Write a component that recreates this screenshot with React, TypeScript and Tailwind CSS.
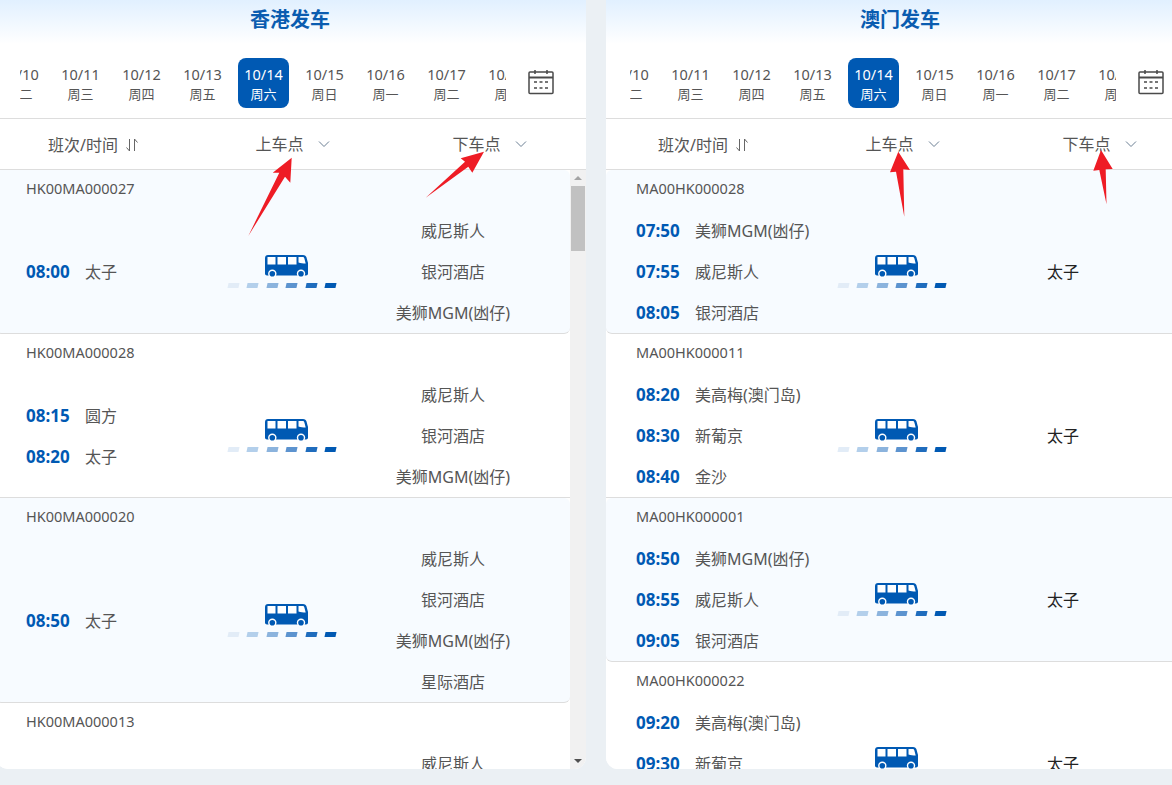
import React from 'react';

interface Stop {
  time?: string;
  name: string;
}

interface Trip {
  code: string;
  from: Stop[];
  to: string[];
}

const dates = [
  { d: '10/10', w: '周二' },
  { d: '10/11', w: '周三' },
  { d: '10/12', w: '周四' },
  { d: '10/13', w: '周五' },
  { d: '10/14', w: '周六', active: true },
  { d: '10/15', w: '周日' },
  { d: '10/16', w: '周一' },
  { d: '10/17', w: '周二' },
  { d: '10/18', w: '周三' },
];

const macauStops = ['威尼斯人', '银河酒店', '美狮MGM(凼仔)'];

const hkTrips: Trip[] = [
  { code: 'HK00MA000027', from: [{ time: '08:00', name: '太子' }], to: macauStops },
  {
    code: 'HK00MA000028',
    from: [
      { time: '08:15', name: '圆方' },
      { time: '08:20', name: '太子' },
    ],
    to: macauStops,
  },
  { code: 'HK00MA000020', from: [{ time: '08:50', name: '太子' }], to: [...macauStops, '星际酒店'] },
  { code: 'HK00MA000013', from: [{ time: '09:20', name: '太子' }], to: macauStops },
];

const macauTrips: Trip[] = [
  {
    code: 'MA00HK000028',
    from: [
      { time: '07:50', name: '美狮MGM(凼仔)' },
      { time: '07:55', name: '威尼斯人' },
      { time: '08:05', name: '银河酒店' },
    ],
    to: ['太子'],
  },
  {
    code: 'MA00HK000011',
    from: [
      { time: '08:20', name: '美高梅(澳门岛)' },
      { time: '08:30', name: '新葡京' },
      { time: '08:40', name: '金沙' },
    ],
    to: ['太子'],
  },
  {
    code: 'MA00HK000001',
    from: [
      { time: '08:50', name: '美狮MGM(凼仔)' },
      { time: '08:55', name: '威尼斯人' },
      { time: '09:05', name: '银河酒店' },
    ],
    to: ['太子'],
  },
  {
    code: 'MA00HK000022',
    from: [
      { time: '09:20', name: '美高梅(澳门岛)' },
      { time: '09:30', name: '新葡京' },
      { time: '09:40', name: '金沙' },
    ],
    to: ['太子'],
  },
];

const CalendarIcon = () => (
  <svg width="26" height="26" viewBox="0 0 26 26" fill="none" stroke="#4a4a4a" strokeWidth="1.5">
    <rect x="1" y="3" width="24" height="21.5" rx="1" />
    <path d="M1 8.5h24" strokeWidth="2" />
    <path d="M7 1v4M19 1v4" />
    <path d="M6 13h3M11.5 13h3M17 13h3M6 19h3M11.5 19h3M17 19h3" />
  </svg>
);

const Chevron = () => (
  <svg width="12" height="8" viewBox="0 0 12 8" fill="none" stroke="#6b7f94" strokeWidth="1">
    <path d="M1 1.5l5 5 5-5" />
  </svg>
);

const SortIcon = () => (
  <svg width="14" height="14" viewBox="0 0 14 14" fill="none" stroke="#666" strokeWidth="1">
    <path d="M4.5 1v12L1.5 9.5M9.5 13V1l3 3.5" />
  </svg>
);

const BusIcon = () => (
  <svg width="43" height="23" viewBox="0 0 43 23" fill="#0059b3">
    <path d="M3 0h35c2 0 3 1 3.5 2.5L43 8v10.5c0 1.2-.8 2-2 2H2c-1.2 0-2-.8-2-2V3c0-1.8 1.2-3 3-3z" />
    <path
      fill="#fff"
      d="M2.5 2h8v7.500h-8zM12.500 2h8.500v7.500h-8.500zM23 2h8.500v7.500H23zM33.500 2h4c1 0 1.500.5 1.800 1.300l1.400 5.200c-2.700 0-5-.3-7.200-1z"
    />
    <circle cx="7.300" cy="18.800" r="4.200" fill="#fff" />
    <circle cx="7.300" cy="18.800" r="2.800" />
    <circle cx="36" cy="18.800" r="4.200" fill="#fff" />
    <circle cx="36" cy="18.800" r="2.800" />
  </svg>
);

const RouteDashes = () => (
  <div className="mt-[5px] -ml-[9px] flex gap-[9px]">
    <span className="h-[5px] w-[10.5px] -skew-x-12 bg-[#e2ecf7]" />
    <span className="h-[5px] w-[10.5px] -skew-x-12 bg-[#b3cfeb]" />
    <span className="h-[5px] w-[10.5px] -skew-x-12 bg-[#8bb3dd]" />
    <span className="h-[5px] w-[10.5px] -skew-x-12 bg-[#5c93cf]" />
    <span className="h-[5px] w-[10.5px] -skew-x-12 bg-[#1f6cbd]" />
    <span className="h-[5px] w-[10.5px] -skew-x-12 bg-[#0059b3]" />
  </div>
);

const TripRow = ({ trip, tinted, dark }: { trip: Trip; tinted: boolean; dark: boolean }) => (
  <div className={`border-b border-[#dddddd] ${tinted ? 'rounded-md bg-[#f7fbff]' : 'bg-white'}`}>
    <div className="flex h-[40px] items-center pb-[2px] pl-[30px] text-[14.5px] text-[#555555]">{trip.code}</div>
    <div className="flex items-center">
      {/* half-pixel centring rounds up in the original */}
      <div className={`w-[200px] pl-[30px] ${(trip.to.length - trip.from.length) % 2 !== 0 ? 'pt-[1px]' : ''}`}>
        {trip.from.map((s) => (
          <div key={s.name} className="flex h-[41px] items-center whitespace-nowrap text-[16px]">
            <span className="w-[59px] shrink-0 text-[17px] font-bold text-[#0059b3]">{s.time}</span>
            <span className="text-[#555555]">{s.name}</span>
          </div>
        ))}
      </div>
      <div className="flex w-[180px] flex-col items-center">
        <BusIcon />
        <RouteDashes />
      </div>
      <div className="w-[154px]">
        {trip.to.map((name) => (
          <div
            key={name}
            className={`flex h-[41px] items-center justify-center whitespace-nowrap text-[16px] ${
              dark ? 'text-[#222222]' : 'text-[#555555]'
            }`}
          >
            {name}
          </div>
        ))}
      </div>
    </div>
  </div>
);

const Scrollbar = () => (
  <div className="flex w-[16px] shrink-0 flex-col items-center bg-[#f1f1f1]">
    <div className="mt-[6px] h-0 w-0 border-x-[4px] border-b-[4px] border-x-transparent border-b-[#a3a3a3]" />
    <div className="mt-[6px] h-[65px] w-[14px] bg-[#c1c1c1]" />
    <div className="mt-auto mb-[6px] h-0 w-0 border-x-[4px] border-t-[4px] border-x-transparent border-t-[#505050]" />
  </div>
);

const Panel = ({
  title,
  trips,
  scrollbar,
  className,
}: {
  title: string;
  trips: Trip[];
  scrollbar: boolean;
  className?: string;
}) => (
  <section className={`flex h-[769px] w-[590px] shrink-0 flex-col overflow-hidden rounded-b-xl bg-white ${className ?? ''}`}>
    <h2 className="flex h-[44px] shrink-0 items-center justify-center bg-gradient-to-b from-[#e1f0ff] to-white pb-[4px] pr-[2px] text-[20px] font-bold text-[#0a5cb0]">
      {title}
    </h2>
    <div className="flex h-[75px] shrink-0 border-b border-[#dddddd] pt-[14px] pl-[24px]">
      <div className="h-[50px] w-[486px] overflow-hidden">
        <div className="-ml-[26px] flex gap-[10px]">
          {dates.map((item) => (
            <div
              key={item.d + item.w}
              className={`flex h-[50px] w-[51px] shrink-0 flex-col items-center justify-center rounded-lg pt-[1px] ${
                item.active ? 'bg-[#0059b3] text-white' : 'text-[#555555]'
              }`}
            >
              <span className="text-[14.5px] leading-[20px] whitespace-nowrap">{item.d}</span>
              <span className="text-[13px] leading-[20px] whitespace-nowrap">{item.w}</span>
            </div>
          ))}
        </div>
      </div>
      <div className="mt-[11px] ml-[22px]">
        <CalendarIcon />
      </div>
    </div>
    <div className="flex h-[51px] shrink-0 border-b border-[#dddddd] text-[16px] text-[#555555]">
      <div className="flex w-[195px] items-center justify-center gap-[7px] pt-[1px]">
        <span>班次/时间</span>
        <SortIcon />
      </div>
      <div className="flex w-[203px] items-center justify-center gap-[14px] pb-[1px]">
        <span>上车点</span>
        <Chevron />
      </div>
      <div className="flex w-[191px] items-center justify-center gap-[14px] pb-[1px]">
        <span>下车点</span>
        <Chevron />
      </div>
    </div>
    <div className="flex min-h-0 flex-1">
      <div className="w-[574px] shrink-0 overflow-hidden">
        {trips.map((trip, i) => (
          <TripRow key={trip.code} trip={trip} tinted={i % 2 === 0} dark={!scrollbar} />
        ))}
      </div>
      {scrollbar && <Scrollbar />}
    </div>
  </section>
);

// red annotation arrows drawn on top of the screenshot
const Arrows = () => (
  <svg className="pointer-events-none absolute top-0 left-0" width="1172" height="785" fill="#ee1c25">
    <polygon points="291.700,157.700 290.300,182.700 285,176.700 248.300,236 279.300,172.700 272.700,172.700" />
    <polygon points="484,151.700 472.300,172.700 468.300,166.700 425.700,197.700 465,161.700 460.700,158.300" />
    <polygon points="898.300,151.700 910,170 903.300,169.300 904.300,216.700 896,171.700 890,172.300" />
    <polygon points="1101,150 1112.700,169 1105.700,169.300 1106.500,204.300 1099.300,170 1093.300,170.700" />
  </svg>
);

export default function App() {
  return (
    <div
      className="relative flex h-[785px] w-full gap-[20px] overflow-hidden bg-[#ebf0f4]"
      style={{ fontFamily: '"Noto Sans", "Noto Sans CJK SC", sans-serif' }}
    >
      <Panel title="香港发车" trips={hkTrips} scrollbar className="-ml-[4px]" />
      <Panel title="澳门发车" trips={macauTrips} scrollbar={false} />
      <Arrows />
    </div>
  );
}
